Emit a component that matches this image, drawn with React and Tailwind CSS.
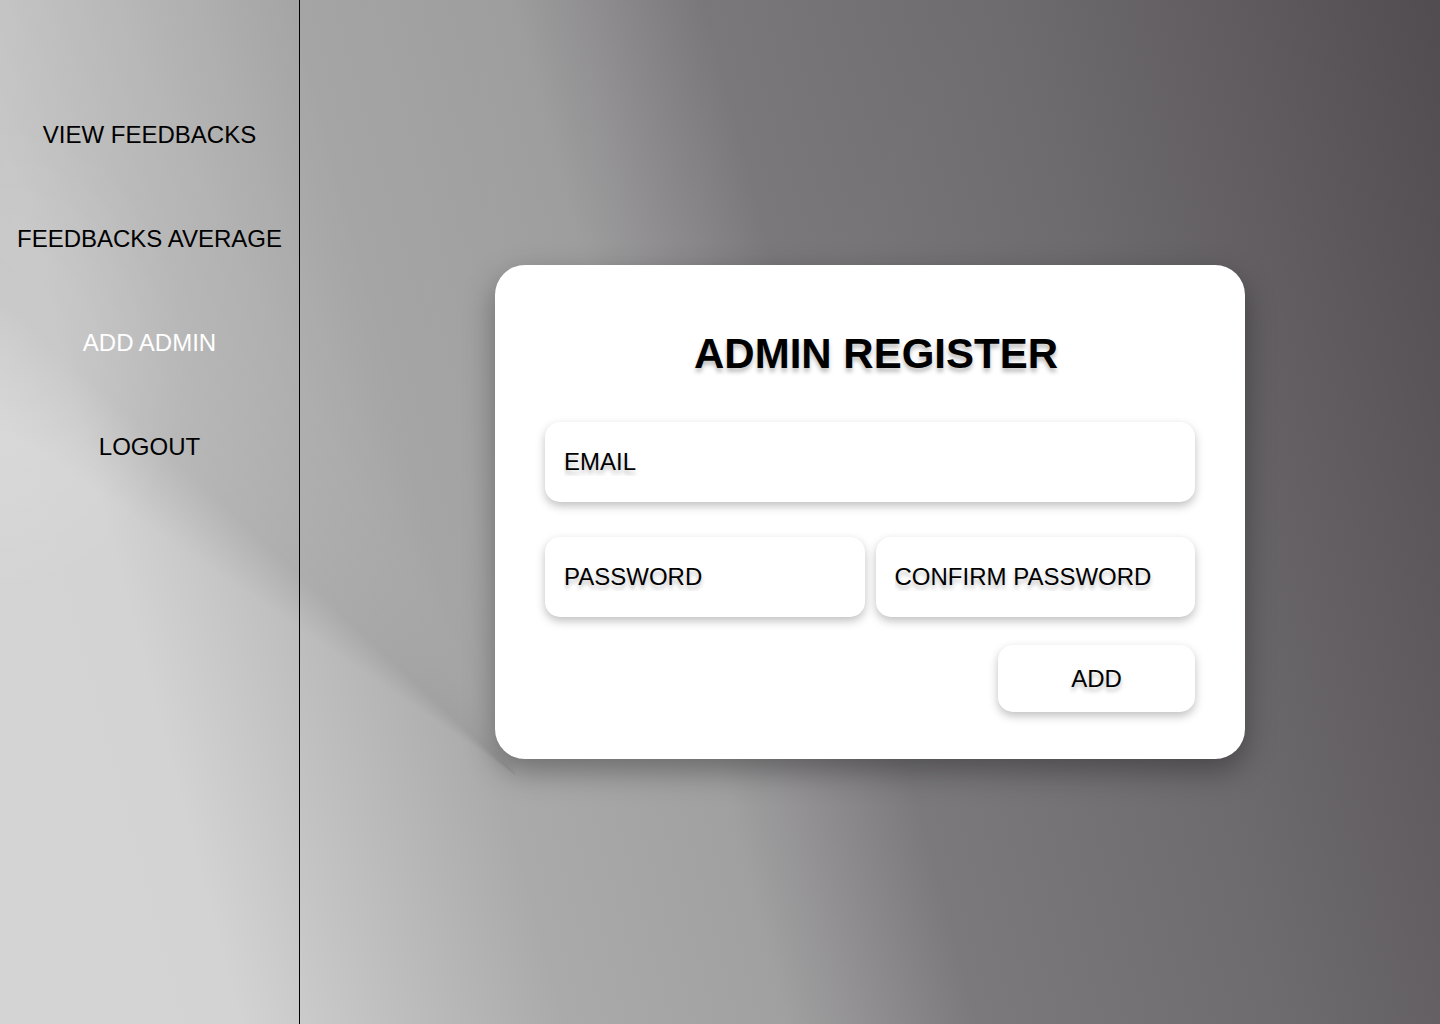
import { useState } from 'react';

const navItems = [
    { label: 'VIEW FEEDBACKS', active: false },
    { label: 'FEEDBACKS AVERAGE', active: false },
    { label: 'ADD ADMIN', active: true },
    { label: 'LOGOUT', active: false },
];

export default function App() {
    const [email, setEmail] = useState('');
    const [password, setPassword] = useState('');
    const [confirm, setConfirm] = useState('');

    return (
        <div className="flex min-h-screen w-full font-['Liberation_Sans',Arial,sans-serif] bg-[radial-gradient(ellipse_190px_240px_at_0px_360px,rgba(255,255,255,0.13)_0%,rgba(255,255,255,0.08)_50%,rgba(255,255,255,0)_100%),conic-gradient(from_0deg_at_515px_775px,rgba(0,0,0,0.02)_0deg,rgba(0,0,0,0)_40deg,rgba(0,0,0,0)_304deg,rgba(0,0,0,0.08)_313deg,rgba(0,0,0,0.04)_332deg,rgba(0,0,0,0.02)_360deg),linear-gradient(75deg,#d4d4d4_0%,#d3d3d3_14%,#c3c3c3_21%,#aaaaaa_33%,#a0a0a0_46%,#908e91_51%,#7b797c_57%,#6e6b6e_75%,#514c50_100%)]">
            {/* Sidebar */}
            <aside className="w-[300px] shrink-0 border-r border-black flex flex-col items-center pt-[119px] gap-[72px]">
                {navItems.map((item) => (
                    <a
                        key={item.label}
                        href="#"
                        className={`text-[24px] leading-8 whitespace-nowrap ${item.active ? 'text-white' : 'text-black'}`}
                    >
                        {item.label}
                    </a>
                ))}
            </aside>

            {/* Main */}
            <main className="flex-1 flex items-center justify-center h-screen">
                <div className="w-[750px] bg-white rounded-[30px] shadow-[0_12px_30px_rgba(0,0,0,0.35)] px-[50px] pt-[61px] pb-[47px]">
                    <h1 className="text-center text-[42px] leading-[56px] font-bold text-black pl-[12px] [text-shadow:0_4px_4px_rgba(0,0,0,0.25)]">
                        ADMIN REGISTER
                    </h1>

                    <form className="mt-[40px] flex flex-col" onSubmit={(e) => e.preventDefault()}>
                        <input
                            type="email"
                            value={email}
                            onChange={(e) => setEmail(e.target.value)}
                            placeholder="EMAIL"
                            className="h-[80px] w-full rounded-[15px] bg-white px-[19px] text-[24px] text-black placeholder:text-black outline-none shadow-[0_4px_10px_rgba(0,0,0,0.25)] [text-shadow:0_4px_4px_rgba(0,0,0,0.25)]"
                        />

                        <div className="mt-[35px] flex gap-[11px]">
                            <input
                                type="password"
                                value={password}
                                onChange={(e) => setPassword(e.target.value)}
                                placeholder="PASSWORD"
                                className="h-[80px] flex-1 min-w-0 rounded-[15px] bg-white px-[19px] text-[24px] text-black placeholder:text-black outline-none shadow-[0_4px_10px_rgba(0,0,0,0.25)] [text-shadow:0_4px_4px_rgba(0,0,0,0.25)]"
                            />
                            <input
                                type="password"
                                value={confirm}
                                onChange={(e) => setConfirm(e.target.value)}
                                placeholder="CONFIRM PASSWORD"
                                className="h-[80px] flex-1 min-w-0 rounded-[15px] bg-white px-[19px] text-[24px] text-black placeholder:text-black outline-none shadow-[0_4px_10px_rgba(0,0,0,0.25)] [text-shadow:0_4px_4px_rgba(0,0,0,0.25)]"
                            />
                        </div>

                        <div className="mt-[28px] flex justify-end">
                            <button
                                type="submit"
                                className="h-[67px] w-[197px] rounded-[15px] bg-white text-[24px] text-black shadow-[0_4px_10px_rgba(0,0,0,0.25)] [text-shadow:0_4px_4px_rgba(0,0,0,0.25)]"
                            >
                                ADD
                            </button>
                        </div>
                    </form>
                </div>
            </main>
        </div>
    );
}
